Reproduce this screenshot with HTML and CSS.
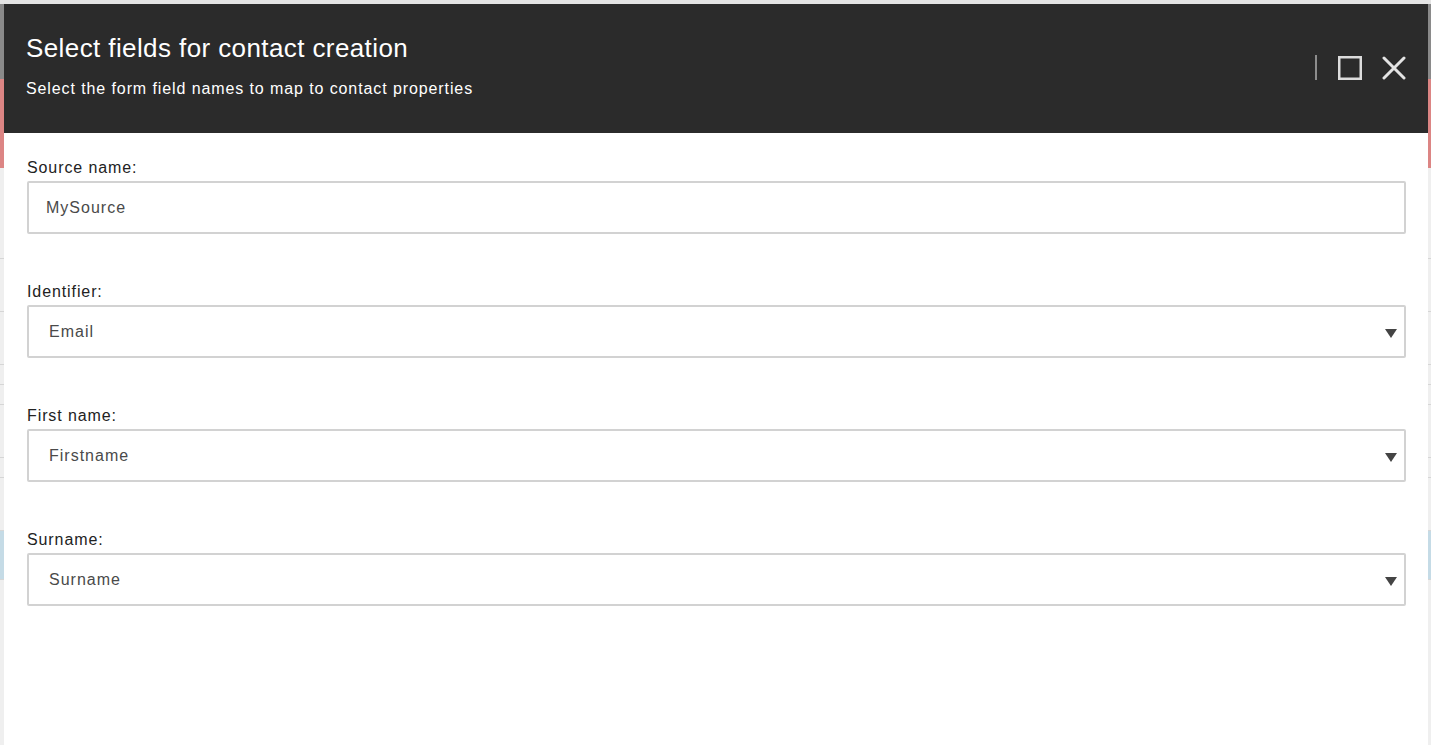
FILE: index.html
```html
<!DOCTYPE html>
<html>
<head>
    <title>Select fields for contact creation</title>
    <link rel="stylesheet" href="styles.css">
</head>
<body>
    <!-- Page behind the dialog -->
    <div class="page">
        <div class="page-top"></div>
        <div class="page-bar"></div>
        <div class="page-alert"></div>
        <div class="page-rows">
            <div class="page-row tall"></div>
            <div class="page-row"></div>
            <div class="page-row"></div>
            <div class="page-row short"></div>
            <div class="page-row short"></div>
            <div class="page-row"></div>
            <div class="page-row short"></div>
            <div class="page-row"></div>
            <div class="page-row selected"></div>
        </div>
    </div>

    <div class="modal">
        <div class="modal-header">
            <div class="modal-titles">
                <h1 class="modal-title">Select fields for contact creation</h1>
                <p class="modal-subtitle">Select the form field names to map to contact properties</p>
            </div>
            <div class="modal-actions">
                <span class="modal-divider"></span>
                <button class="icon-button" title="Maximize">
                    <svg width="24" height="24" viewBox="0 0 24 24">
                        <rect x="1.25" y="1.25" width="21.5" height="21.5" fill="none" stroke="#dcdcdc" stroke-width="2.5"/>
                    </svg>
                </button>
                <button class="icon-button" title="Close">
                    <svg width="24" height="24" viewBox="0 0 24 24">
                        <path d="M2 2 L22 22 M22 2 L2 22" stroke="#e4e4e4" stroke-width="3" stroke-linecap="round"/>
                    </svg>
                </button>
            </div>
        </div>

        <div class="modal-body">
            <div class="field">
                <label class="field-label">Source name:</label>
                <input class="field-input" type="text" value="MySource">
            </div>
            <div class="field">
                <label class="field-label">Identifier:</label>
                <div class="field-select">
                    <span>Email</span>
                    <span class="select-arrow"></span>
                </div>
            </div>
            <div class="field">
                <label class="field-label">First name:</label>
                <div class="field-select">
                    <span>Firstname</span>
                    <span class="select-arrow"></span>
                </div>
            </div>
            <div class="field">
                <label class="field-label">Surname:</label>
                <div class="field-select">
                    <span>Surname</span>
                    <span class="select-arrow"></span>
                </div>
            </div>
        </div>
    </div>
</body>
</html>
```

FILE: styles.css
```css
/* Page behind the dialog */
html, body {
    margin: 0;
    padding: 0;
    height: 100%;
    overflow: hidden;
}

body {
    font-family: "Liberation Sans", Arial, sans-serif;
    background-color: #efefef;
}

.page-top {
    height: 4px;
    background-color: #e4e4e4;
}

.page-bar {
    height: 75px;
    background-color: #8a8a8a;
}

.page-alert {
    height: 89px;
    background-color: #dc8584;
}

.page-rows {
    display: flex;
    flex-direction: column;
}

.page-row {
    height: 52px;
    border-bottom: 1px solid #d6d6d6;
}

.page-row.tall {
    height: 90px;
}

.page-row.short {
    height: 19px;
}

.page-row.selected {
    height: 48px;
    background-color: #c5dbe6;
}

/* Dialog */
.modal {
    position: fixed;
    top: 4px;
    left: 4px;
    right: 3px;
    bottom: 0;
    background-color: #fff;
    display: flex;
    flex-direction: column;
}

.modal-header {
    display: flex;
    align-items: center;
    justify-content: space-between;
    background-color: #2b2b2b;
    color: #fff;
    padding: 29px 22px 34px 22px;
}

.modal-title {
    margin: 0;
    font-size: 26px;
    font-weight: normal;
    line-height: 30px;
    letter-spacing: 0.4px;
}

.modal-subtitle {
    margin: 16px 0 0 0;
    font-size: 16px;
    line-height: 20px;
    letter-spacing: 0.9px;
}

.modal-actions {
    display: flex;
    align-items: center;
    gap: 20px;
    margin-top: 3px;
}

.modal-divider {
    width: 2px;
    height: 25px;
    background-color: #8d8d8d;
    margin-right: 1px;
}

.icon-button {
    background: none;
    border: none;
    padding: 0;
    display: flex;
    cursor: pointer;
}

.modal-body {
    padding: 25px 22px 0 23px;
    display: flex;
    flex-direction: column;
    gap: 48px;
}

.field {
    display: flex;
    flex-direction: column;
}

.field-label {
    font-size: 16px;
    line-height: 20px;
    letter-spacing: 0.9px;
    color: #222;
    margin-bottom: 3px;
}

.field-input,
.field-select {
    box-sizing: border-box;
    height: 53px;
    border: 2px solid #d2d2d2;
    border-radius: 2px;
    font-family: "Liberation Sans", Arial, sans-serif;
    font-size: 16px;
    letter-spacing: 1px;
    color: #4a4a4a;
    background-color: #fff;
}

.field-input {
    padding: 0 17px;
    outline: none;
}

.field-select {
    display: flex;
    align-items: center;
    justify-content: space-between;
    padding: 0 7px 0 20px;
}

.select-arrow {
    width: 0;
    height: 0;
    border-left: 6px solid transparent;
    border-right: 6px solid transparent;
    border-top: 9px solid #444;
    margin-top: 4px;
}
```
